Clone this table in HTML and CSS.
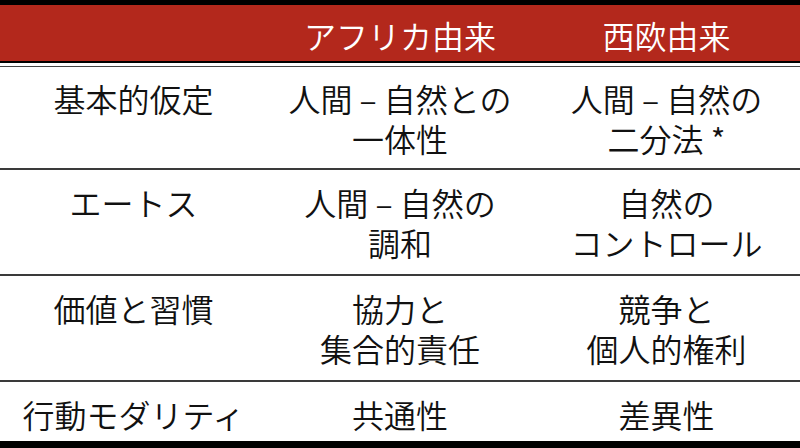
FILE: index.html
```html
<!DOCTYPE html>
<html lang="ja">
<head>
<meta charset="utf-8">
<link rel="stylesheet" href="styles.css">
</head>
<body>
<div class="table">
  <div class="row head">
    <div class="cell"></div>
    <div class="cell">アフリカ由来</div>
    <div class="cell">西欧由来</div>
  </div>
  <div class="row first">
    <div class="cell">基本的仮定</div>
    <div class="cell">人間 – 自然との<br>一体性</div>
    <div class="cell">人間 – 自然の<br>二分法 *</div>
  </div>
  <div class="row">
    <div class="cell">エートス</div>
    <div class="cell">人間 – 自然の<br>調和</div>
    <div class="cell">自然の<br>コントロール</div>
  </div>
  <div class="row">
    <div class="cell">価値と習慣</div>
    <div class="cell">協力と<br>集合的責任</div>
    <div class="cell">競争と<br>個人的権利</div>
  </div>
  <div class="row last">
    <div class="cell">行動モダリティ</div>
    <div class="cell">共通性</div>
    <div class="cell">差異性</div>
  </div>
</div>
</body>
</html>
```
FILE: styles.css
```css
html, body {
  margin: 0;
  padding: 0;
  background: #ffffff;
}
body {
  width: 800px;
  height: 448px;
  overflow: hidden;
  font-family: "Noto Sans CJK JP", "Noto Sans", sans-serif;
  font-weight: 350;
  font-size: 32px;
  line-height: 40px;
  color: #111111;
}
.table {
  display: flex;
  flex-direction: column;
  border-top: 5px solid #000000;
  border-bottom: 7px solid #000000;
  height: 436px;
}
.row {
  display: grid;
  grid-template-columns: 267px 266px 267px;
  border-bottom: 2px solid #3a3a3a;
}
.row.head {
  background: #b3281c;
  background-clip: padding-box;
  color: #ffffff;
  height: 56px;
  border-bottom: 2px solid #000000;
}
.row.head .cell {
  padding-top: 10px;
}
.row.first {
  border-top: 3px solid #ffffff;
  box-shadow: inset 0 1px 0 #444444;
  height: 102px;
}
.row:nth-child(3), .row:nth-child(4) {
  height: 104px;
}
.row.last {
  border-bottom: none;
  flex: 1;
}
.cell {
  text-align: center;
  padding-top: 12px;
  white-space: nowrap;
}
```
